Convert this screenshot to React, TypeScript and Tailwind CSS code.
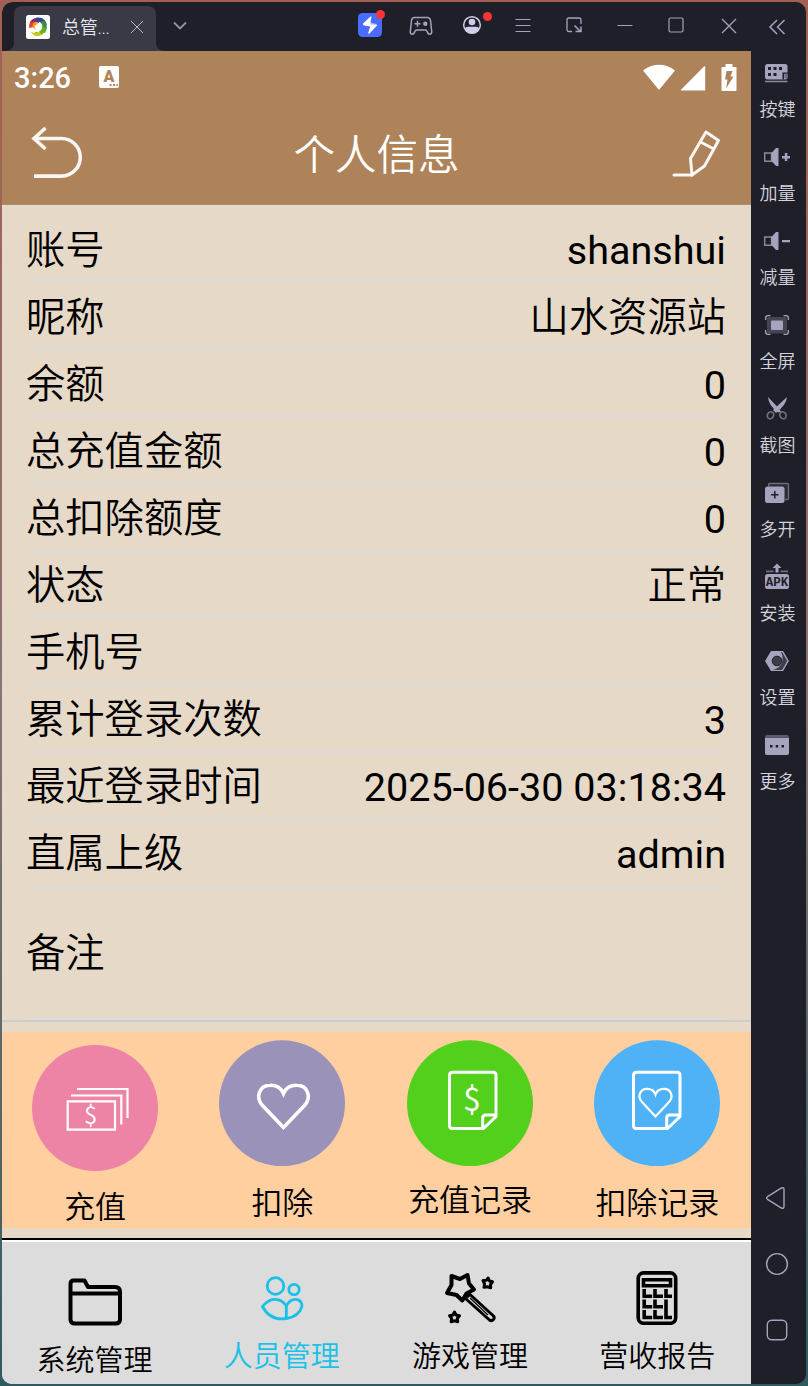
import React, { useState } from "react";

const fields = [
  { label: "账号", value: "shanshui" },
  { label: "昵称", value: "山水资源站", cjk: true },
  { label: "余额", value: "0" },
  { label: "总充值金额", value: "0" },
  { label: "总扣除额度", value: "0" },
  { label: "状态", value: "正常", cjk: true },
  { label: "手机号", value: "" },
  { label: "累计登录次数", value: "3" },
  { label: "最近登录时间", value: "2025-06-30 03:18:34" },
  { label: "直属上级", value: "admin" },
];

const dollarFont = '"Noto Sans CJK SC", sans-serif';

/* Title bar */
function TitleBar() {
  return (
    <div className="flex h-[49px] bg-[#1f1f29] text-[#a5a3bd]">
      <div className="flex w-[342px]">
        <div className="relative mt-1 ml-3 flex h-[45px] w-[142px] items-center rounded-t-lg bg-[#3a3a46] pl-3">
          <svg width="24" height="24" viewBox="0 0 24 24" className="-mt-1 shrink-0">
            <rect width="24" height="24" rx="2.500" fill="#fff" />
            <path d="M3.200 13C2.500 7 6 3 11 3L12 7C8.500 7 7 9.500 8 12z" fill="#e8402a" />
            <path d="M4 8C6 3.500 11 1.500 16 4L12.500 8C10 6 7 6 4 8z" fill="#7b2387" />
            <path d="M10 2.800C16 1.500 20.500 5.500 20.800 10L17 12C16.500 8 14 6 10 6.500z" fill="#2b4a8c" />
            <path d="M17.500 5.500C22 9.500 21.500 15 18.500 18L14.500 16C17.500 13 17 9 14.500 7z" fill="#3f8f3a" />
            <path d="M20 13.500C19 19 14.500 21.500 9.500 20.500L9 17C13 17.500 16 15.500 16.500 12z" fill="#6cb31b" />
            <path d="M4.500 16.500C7.500 22 13 21.500 15.500 19.500L13.500 16.800C10.500 18.500 7 18 4.500 16.500z" fill="#c9cc1c" />
            <path d="M6.500 11C6.500 7.500 9.500 6.500 12 7.200L11.500 9.500C9.500 10 9 12 10 14.500C8 14 6.700 13 6.500 11z" fill="#f39a1e" />
            <path d="M9.500 13.500C9 9.500 14.500 9 14 13 13.800 15 12 15.500 11.300 17" fill="none" stroke="#fff" strokeWidth="2" />
          </svg>
          <span className="-mt-px ml-3 text-[18px] leading-5 font-[350] tracking-[-0.300px] text-[#e8e8ee]">总管...</span>
          <svg width="14" height="14" viewBox="0 0 14 14" stroke="#b9b9c2" className="absolute top-3.5 right-3">
            <path d="M1 1l12 12M13 1L1 13" />
          </svg>
          <svg width="10" height="8" viewBox="0 0 10 8" fill="#3a3a46" className="absolute bottom-0 -left-2.5">
            <path d="M10 0v8H0c6 0 10-3 10-8z" />
          </svg>
          <svg width="10" height="8" viewBox="0 0 10 8" fill="#3a3a46" className="absolute -right-2.5 bottom-0">
            <path d="M0 0v8h10C4 8 0 5 0 0z" />
          </svg>
        </div>
        <svg width="14" height="9" viewBox="0 0 14 9" fill="none" stroke="#94939f" strokeWidth="1.800" className="mt-[19px] ml-[17px]">
          <path d="M1 1.500l6 6 6-6" />
        </svg>
      </div>
      <div className="flex h-[47px] flex-1 items-center [&>*]:shrink-0">
        <div className="relative flex w-[51px] justify-center">
          <svg width="24" height="24" viewBox="0 0 24 24" className="-mt-px">
            <rect width="24" height="24" rx="4.500" fill="#4a6cff" />
            <path d="M12.500 3.500L5 10.500q-.5 1.500 1 2l6 1.500-2 6.500h1.500L19 12.500q.3-1-1-1.500l-5.500-1.500 1-6z" fill="#fff" />
            <path d="M5 13.300l6.500.2M12.500 10.800l6 .2" stroke="#4a6cff" strokeWidth="0.800" />
          </svg>
          <span className="absolute -top-1 right-2.5 size-[9px] rounded-full bg-[#ff3434]" />
        </div>
        <div className="flex w-[51px] justify-center">
          <svg width="24" height="20" viewBox="0 0 24 20" fill="none" stroke="currentColor" strokeWidth="1.500">
            <path d="M5.500 1.500h13q2.500 0 3 3l1.200 11q.1 2.700-2 2.700-1.700 0-2.700-3-.5-1.200-1.700-1.200H7.700q-1.200 0-1.700 1.200-1 3-2.700 3-2.100 0-2-2.700l1.200-11q.5-3 3-3z" />
            <path d="M5.500 7.700h6M8.500 4.700v6" />
            <circle cx="16.300" cy="7.700" r="2.200" fill="currentColor" stroke="none" />
          </svg>
        </div>
        <div className="relative flex w-[51px] justify-center">
          <svg width="20" height="20" viewBox="0 0 20 20" className="-mt-px text-[#cfcde8]">
            <circle cx="10" cy="10" r="8.300" fill="none" stroke="currentColor" strokeWidth="1.500" />
            <circle cx="10" cy="7" r="3.300" fill="currentColor" />
            <path d="M3 14q0-2.300 2.500-2.300h9q2.500 0 2.500 2.300Q14.500 18.500 10 18.500T3 14z" fill="currentColor" />
          </svg>
          <span className="absolute -top-1 right-[5px] size-[9px] rounded-full bg-[#ff3434]" />
        </div>
        <div className="flex w-[51px] justify-center">
          <svg width="16" height="14" viewBox="0 0 16 14" stroke="currentColor" strokeWidth="1.200">
            <path d="M0.500 0.500h15M0.500 6.500h15M0.500 12.500h15" />
          </svg>
        </div>
        <div className="flex w-[51px] justify-center">
          <svg width="16" height="16" viewBox="0 0 16 16" fill="none" stroke="currentColor" strokeWidth="1.300" className="-mt-px">
            <path d="M6 14.500H3q-2 0-2-2V3q0-2 2-2h10q2 0 2 2v4" />
            <path d="M8.500 8.500l5.500 5.500M15 9.500v5H9.500" strokeWidth="1.500" />
          </svg>
        </div>
        <div className="flex w-[51px] justify-center">
          <svg width="16" height="2" viewBox="0 0 16 2" stroke="currentColor">
            <path d="M0.500 0.500h15" />
          </svg>
        </div>
        <div className="flex w-[51px] justify-center">
          <svg width="16" height="16" viewBox="0 0 16 16" fill="none" stroke="currentColor" strokeWidth="1.200" className="-mt-px">
            <rect x="1" y="1" width="14" height="14" rx="1.500" />
          </svg>
        </div>
        <div className="flex w-[50px] justify-center pl-[5px]">
          <svg width="16" height="16" viewBox="0 0 16 16" stroke="currentColor" strokeWidth="1.300">
            <path d="M1 1l14 14M15 1L1 15" />
          </svg>
        </div>
      </div>
    </div>
  );
}

/* Android status bar + page header */
function Header() {
  return (
    <header className="h-[154px] border-b border-[#a39079] bg-[#ae8359] text-white">
      <div className="flex h-[51px] items-center pt-px pr-3.5 pl-3">
        <span className="pt-0.5 font-[Roboto] text-[29px] leading-none font-medium">3:26</span>
        <svg width="20" height="22" viewBox="0 0 20 22" className="-mt-px ml-[28px]">
          <rect width="20" height="22" rx="2" fill="#fff" />
          <text x="10" y="16" textAnchor="middle" fontFamily="Roboto" fontWeight="900" fontSize="16" fill="#ae8359">A</text>
          <path d="M10.500 19h2M14 19h2M17.300 19h1.500" stroke="#ae8359" strokeWidth="2" />
        </svg>
        <div className="ml-auto flex items-end">
          <svg width="34" height="26" viewBox="0 0 34 26" fill="#fff" className="mb-px">
            <path d="M1 6.500Q8 .8 17 .8t16 5.700L17.800 25q-.8 1-1.600 0z" />
          </svg>
          <svg width="26" height="25" viewBox="0 0 26 25" fill="#fff" className="ml-[4px]">
            <path d="M24 .5q1.200-.8 1.200.8V24.500H1.500q-1.200 0-.3-1z" />
          </svg>
          <svg width="16" height="27" viewBox="0 0 16 27" fill="#fff" className="ml-[15px]">
            <path d="M4.500 0h7v3H15q.5 0 .5 1v22q0 1-.5 1H1q-.5 0-.5-1V4q0-1 .5-1h3.500z" />
            <path d="M5.500 7h6L9.500 12.500H12.500L5 24.500l1.500-9H4z" fill="#ae8359" />
          </svg>
        </div>
      </div>
      <div className="flex h-[102px] items-center justify-between pr-[29px] pl-[29px]">
        <svg width="52" height="56" viewBox="0 0 52 56" fill="none" stroke="#fff" strokeOpacity="0.930" strokeWidth="3.600" className="mt-0.5">
          <path d="M14.500 2L3 12.500l11.500 10.500M3 12.500h27.500a18.800 18.800 0 0 1 0 37.600H3" />
        </svg>
        <h1 className="pt-1.5 pr-0.5 text-[41.500px] leading-none font-[350]">个人信息</h1>
        <svg width="50" height="50" viewBox="0 0 50 50" fill="none" stroke="#fff" strokeOpacity="0.930" strokeWidth="3" strokeLinejoin="round" className="mt-px">
          <path d="M34 3L46.500 11.500 32.500 37 20 46 18.500 29.500zM28.500 13L41 19.500" />
          <path d="M2 46h18" strokeLinecap="round" />
        </svg>
      </div>
    </header>
  );
}

function Actions() {
  return (
    <div className="flex h-[196px] bg-[#ffcf9f] font-[350]">
      <div className="flex w-1/4 flex-col items-center pt-[13px] pr-px">
        <svg width="126" height="126" viewBox="0 0 126 126" fill="none" stroke="#fff" strokeWidth="2.200">
          <circle cx="63" cy="63" r="63" fill="#ee84a5" stroke="none" />
          <path d="M35.700 56.300H83V84.700H35.700zM39 50.500H89.300V79.500M45 44H95.500V73" />
          <text x="58.500" y="79" textAnchor="middle" fontSize="24" fontFamily={dollarFont} fill="#fff" stroke="none">$</text>
        </svg>
        <span className="mt-[21px] text-[31px] leading-8">充值</span>
      </div>
      <div className="flex w-1/4 flex-col items-center pt-2 pr-px">
        <svg width="126" height="126" viewBox="0 0 126 126" fill="none" stroke="#fff" strokeWidth="3.600">
          <circle cx="63" cy="63.300" r="63" fill="#9a92b9" stroke="none" />
          <path d="M64.500 87.500L43.500 65.500C36 57 40.500 45.500 51 45.300 58 45 62.500 49 64.500 53.500 66.500 49 71 45 78 45.300 88.500 45.500 93 57 85.500 65.500z" />
        </svg>
        <span className="mt-[22px] text-[31px] leading-8">扣除</span>
      </div>
      <div className="flex w-1/4 flex-col items-center pt-2">
        <svg width="126" height="126" viewBox="0 0 126 126" fill="none" stroke="#fff" strokeWidth="3">
          <circle cx="63" cy="63.300" r="63" fill="#53d01c" stroke="none" />
          <path d="M45.500 32.300H86q3 0 3 3V76.500L76.500 88.500H45.500q-3 0-3-3V35.300q0-3 3-3zM75.700 88.500V78q0-3 3-3H89" />
          <text x="65" y="70.500" textAnchor="middle" fontSize="32" fontWeight="400" fontFamily={dollarFont} fill="#fff" stroke="none">$</text>
        </svg>
        <span className="mt-[19px] text-[31px] leading-8">充值记录</span>
      </div>
      <div className="flex w-1/4 flex-col items-center pt-2">
        <svg width="126" height="126" viewBox="0 0 126 126" fill="none" stroke="#fff" strokeWidth="3">
          <circle cx="63" cy="63.300" r="63" fill="#4fb2f6" stroke="none" />
          <path d="M42.500 32.300H83q3 0 3 3V76.500L73.500 88.500H42.500q-3 0-3-3V35.300q0-3 3-3zM72.700 88.500V78q0-3 3-3H86" />
          <path d="M61.500 76.500L48 62C43 56.500 46 48.800 53 48.800 57.500 48.800 60.500 51.500 61.500 54.500 62.500 51.500 65.500 48.800 70 48.800 77 48.800 80 56.500 75 62z" strokeWidth="2.200" />
        </svg>
        <span className="mt-[22px] text-[31px] leading-8">扣除记录</span>
      </div>
    </div>
  );
}

function TabBar() {
  const [tab, setTab] = useState("user");
  const color = (name: string) => (tab === name ? "text-[#18c1e8]" : "text-black");

  return (
    <nav className="flex flex-1 border-t-2 border-white bg-[#dcdcdc] text-[29px] font-[350]">
      <button onClick={() => setTab("system")} className={`flex w-1/4 flex-col items-center pt-[35px] pr-0.5 ${color("system")}`}>
        <svg width="56" height="50" viewBox="0 0 56 50" fill="none" stroke="currentColor" strokeWidth="4" strokeLinejoin="round">
          <path d="M3.500 42.500V7q0-3.500 3-3.500h11l3.500 6.500h27q5 0 5 5V42.500q0 4-4.500 4H8Q3.500 46.500 3.500 42.500zM3.500 16.500h49.500" />
        </svg>
        <span className="mt-[18px] leading-8">系统管理</span>
      </button>
      <button onClick={() => setTab("user")} className={`flex w-1/4 flex-col items-center pt-[33px] pr-0.5 ${color("user")}`}>
        <svg width="44" height="47" viewBox="0 0 44 47" fill="none" stroke="currentColor" strokeWidth="2.800">
          <circle cx="15.500" cy="11" r="8.300" />
          <circle cx="34" cy="14.500" r="5.200" />
          <path d="M2.500 31.500Q8 24.500 14.500 24.300 22 24 26.300 31V43.500Q10 46 2.500 31.500z" />
          <path d="M26.300 31Q30 24 36 24.300q6 .7 6 7Q39 41.500 26.300 43.500" />
        </svg>
        <span className="mt-[19px] leading-8">人员管理</span>
      </button>
      <button onClick={() => setTab("game")} className={`flex w-1/4 flex-col items-center pt-[29px] ${color("game")}`}>
        <svg width="54" height="54" viewBox="0 0 54 54" fill="none" stroke="currentColor" strokeWidth="4" strokeLinejoin="round">
          <path d="M8.500 5L17 8 24.500 4 26 12.500 31 18.500 23.500 22.500 19.300 29.500 13.500 24 4 22 8.500 14z" />
          <path d="M22.500 27.500l4.500-4L50.500 45q1.500 2-.2 3.700-1.800 1.800-3.800.3z" strokeWidth="3" />
          <path d="M27 27l18 17" strokeWidth="1.200" />
          <path d="M45 7l1.500 3 3 .8-2 2.700.2 3.200-3.200-1-3.500.5.500-3.500L40 9.500l3.500-.2zM11.500 41l1.500 3 3.500.7-2.200 2.700.4 3.300-3.200-1-3.300 1 .4-3.300L6.500 44.700 10 44z" strokeWidth="3" />
        </svg>
        <span className="mt-4 leading-8">游戏管理</span>
      </button>
      <button onClick={() => setTab("report")} className={`flex w-1/4 flex-col items-center pt-[29px] ${color("report")}`}>
        <svg width="42" height="54" viewBox="0 0 42 54" fill="none" stroke="currentColor" strokeWidth="3.600">
          <rect x="2.200" y="1.900" width="37.500" height="50.400" rx="5.500" />
          <path d="M7.500 8.700h27v6h-27z" />
          <path d="M8.200 18v7.200h8M19 18v7.200h8M30 18v7.200h6M8.200 28.500v7.200h8M19 28.500v7.200h8M30 28.500v18h6M8.200 39v7.500h8M19 39v7.500h8" />
        </svg>
        <span className="mt-4 leading-8">营收报告</span>
      </button>
    </nav>
  );
}

const tools = [
  {
    name: "按键",
    icon: (
      <>
        <rect x="2" y="3" width="22.500" height="15.500" rx="2.500" />
        <path d="M5 6h3v3H5zM10.500 6h3v3h-3zM16 6h3v3h-3zM5 12h3v3H5zM10.500 12h3v3h-3zM19.500 11.500h1.500v7h-1.500zM21 11.500h4V13h-4z" fill="#1f1f29" />
        <path d="M21.500 12.500h3v5h-3z" fill="#6e6d80" />
        <path d="M2 19.800h22.500v1.400H2z" fill="#8c8ba0" />
      </>
    ),
  },
  {
    name: "加量",
    icon: (
      <>
        <path d="M8.500 8H1.700v8.200H8.500z" fill="none" stroke="#8c8ba0" strokeWidth="1.400" />
        <path d="M8.500 8L13 3h2.500v18H13l-4.500-5z" />
        <path d="M19 11h8v2.500h-8zM21.800 8h2.500v8h-2.500z" />
      </>
    ),
  },
  {
    name: "减量",
    icon: (
      <>
        <path d="M8.500 8H1.700v8.200H8.500z" fill="none" stroke="#8c8ba0" strokeWidth="1.400" />
        <path d="M8.500 8L13 3h2.500v18H13l-4.500-5z" />
        <path d="M19 11h8v2.200h-8z" />
      </>
    ),
  },
  {
    name: "全屏",
    icon: (
      <>
        <rect x="4" y="4" width="20" height="16.500" rx="1.500" fill="#45454f" />
        <rect x="8" y="7.500" width="12" height="9.500" rx="1" />
        <path d="M2.600 7V5q0-2.400 2.400-2.400h2.500M20.500 2.600H23q2.400 0 2.400 2.400v2M25.400 17v2q0 2.400-2.400 2.400h-2.500M7.500 21.400H5Q2.600 21.400 2.600 19v-2" fill="none" stroke="#a5a3bd" strokeWidth="1.300" />
      </>
    ),
  },
  {
    name: "截图",
    icon: (
      <>
        <ellipse cx="7.500" cy="18.300" rx="3" ry="3.600" fill="none" stroke="#6e6d80" strokeWidth="1.700" transform="rotate(30 7.500 18.300)" />
        <ellipse cx="20" cy="18.300" rx="3" ry="3.600" fill="none" stroke="#6e6d80" strokeWidth="1.700" transform="rotate(-30 20 18.300)" />
        <path d="M5 0L14 9.500 18 14.500 15.500 15.500Q5.500 9 5 0z" />
        <path d="M24 0Q23.500 7.500 13 16L10 13z" />
      </>
    ),
  },
  {
    name: "多开",
    icon: (
      <>
        <path d="M5.700 5.500V3q0-.5 1-.5H24.500q1 0 1 1V17.500q0 1-1 1H22" fill="#2c2c37" stroke="#6e6d80" strokeWidth="1.300" />
        <rect x="2" y="5.500" width="19.500" height="16.500" rx="2.500" />
        <path d="M11.800 10v7.500M8 13.800h7.500" stroke="#1f1f29" strokeWidth="1.500" />
      </>
    ),
  },
  {
    name: "安装",
    icon: (
      <>
        <path d="M14 -1.500l4.500 4.500h-3v4.500h-3V3h-3z" />
        <path d="M3 5.500h7.500v1.700H3zM17.500 5.500H25v1.700h-7.500z" fill="#6e6d80" />
        <rect x="2" y="9" width="24" height="15" rx="2.500" />
        <text x="14" y="20.500" textAnchor="middle" fontFamily="Liberation Mono, monospace" fontWeight="700" fontSize="12.500" fill="#1f1f29">APK</text>
      </>
    ),
  },
  {
    name: "设置",
    icon: (
      <>
        <path d="M8 2h12l5.500 10L20 22H8L2 12z" />
        <path d="M20 3l4.500 9L20 21H10Q17 19 19 14 20.500 8 18 3z" fill="#3d3d4a" />
        <circle cx="14" cy="12" r="4.800" fill="#3d3d4a" stroke="#1f1f29" strokeWidth="1" />
        <path d="M19.500 2.500L25 12l-5.500 9.500" fill="none" stroke="#a5a3bd" strokeWidth="1.300" />
      </>
    ),
  },
  {
    name: "更多",
    icon: (
      <>
        <path d="M3.500 2h21q1.500 0 1.500 2.500H2Q2 2 3.500 2z" fill="#5b5a6b" />
        <path d="M2 4.700h24V20q0 2-2 2H4q-2 0-2-2z" />
        <path d="M7 12h2.500v2.500H7zM12.700 12h2.500v2.500h-2.500zM18.500 12H21v2.500h-2.500z" fill="#1f1f29" />
      </>
    ),
  },
];

function Sidebar() {
  return (
    <aside className="flex w-[55px] flex-col items-center bg-[#1f1f29] pb-[21px]">
      <div className="flex h-[49px] items-center pr-[3px]">
        <svg width="18" height="16" viewBox="0 0 18 16" fill="none" stroke="#a5a3bd" strokeWidth="1.500">
          <path d="M9 1L2 8l7 7M16.500 1l-7 7 7 7" />
        </svg>
      </div>
      {tools.map((tool) => (
        <button key={tool.name} className="flex h-[84px] w-full flex-col items-center pt-2.5 pr-[3px]">
          <svg width="28" height="24" viewBox="0 0 28 24" fill="#a5a3bd" className="shrink-0 overflow-visible">
            {tool.icon}
          </svg>
          <span className="mt-[15px] ml-px text-[18px] leading-5 font-[350] text-[#d4d4dc]">{tool.name}</span>
        </button>
      ))}
      <div className="mt-auto mr-[3px] flex flex-col [&>svg]:my-[21px]">
        <svg width="24" height="24" viewBox="0 0 24 24" fill="none" stroke="#a5a3bd" strokeWidth="1.400">
          <path d="M2.500 10.700L16.500 2q2.500-1 2.500 1.500v17q0 2.500-2.500 1.500L2.500 13.300q-1.800-1.300 0-2.600z" />
        </svg>
        <svg width="24" height="24" viewBox="0 0 24 24" fill="none" stroke="#a5a3bd" strokeWidth="1.400">
          <circle cx="12" cy="12" r="10.400" />
        </svg>
        <svg width="24" height="24" viewBox="0 0 24 24" fill="none" stroke="#a5a3bd" strokeWidth="1.400">
          <rect x="2.300" y="2.300" width="19.400" height="19.400" rx="4.500" />
        </svg>
      </div>
    </aside>
  );
}

export default function App() {
  return (
    <div className="h-[1386px] w-[808px] bg-linear-to-b from-[#a35f52] via-[#8a7474] to-[#2f5a60] p-0.5 font-['Roboto','Noto_Sans_CJK_SC',sans-serif]">
      <div className="flex h-[1382px] w-[804px] overflow-hidden rounded-[10px]">
        <main className="flex w-[749px] flex-col bg-[#e6d9c7] text-black">
          <TitleBar />
          <Header />
          {/* Profile fields */}
          <div className="px-6 pt-[11px] text-[39.300px] font-[350]">
            {fields.map((field) => (
              <div key={field.label} className="flex h-[67.100px] items-center justify-between border-b-2 border-[#dcdcda] pt-[5px] pr-px">
                <span>{field.label}</span>
                <span className={field.cjk ? "" : "text-[39.600px] font-normal"}>{field.value}</span>
              </div>
            ))}
            <div className="flex h-[133px] items-center border-b-2 border-[#dcdcda] pt-[5px]">备注</div>
          </div>
          <div className="h-0.5 bg-[#cccccc]" />
          <div className="border-b-2 border-black pt-2.5 pb-2.5">
            <Actions />
          </div>
          <TabBar />
        </main>
        <Sidebar />
      </div>
    </div>
  );
}
